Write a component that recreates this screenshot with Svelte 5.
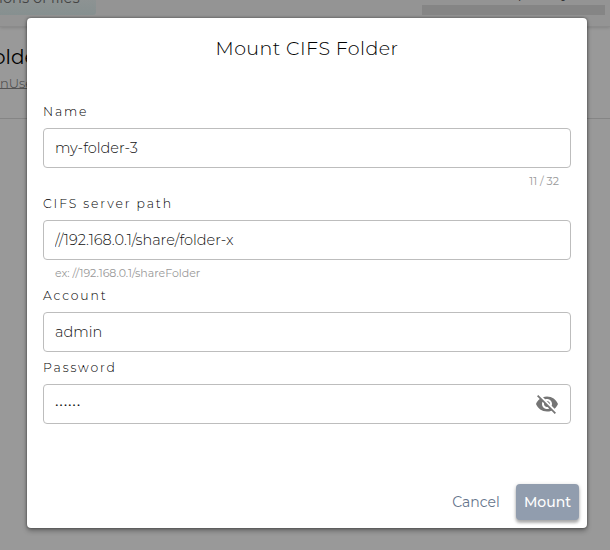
<script>
  let name = $state('my-folder-3');
  let path = $state('//192.168.0.1/share/folder-x');
  let account = $state('admin');
</script>

<div class="page">
  <header>
    <div class="chip">ions of files</div>
    <div class="usage"><span>Capacity</span><div class="bar"></div></div>
  </header>
  <section>
    <h1>olde</h1>
    <a class="user" href="#user">nUse</a>
  </section>
  <div class="shade">
    <form class="dialog" onsubmit={(e) => e.preventDefault()}>
      <h2>Mount CIFS Folder</h2>
      <label for="name">Name</label>
      <input id="name" bind:value={name} />
      <p class="hint count">11 / 32</p>
      <label for="path">CIFS server path</label>
      <input id="path" bind:value={path} />
      <p class="hint">ex: //192.168.0.1/shareFolder</p>
      <label for="account">Account</label>
      <input id="account" bind:value={account} />
      <div class="gap"></div>
      <label for="password">Password</label>
      <div class="field" id="password">
        <span class="dots">••••••</span>
        <svg width="24" height="24" viewBox="0 0 24 24" fill="#757575"><path d="M12 7c2.76 0 5 2.24 5 5 0 .65-.13 1.26-.36 1.83l2.92 2.92c1.51-1.26 2.7-2.89 3.43-4.75-1.73-4.39-6-7.5-11-7.5-1.4 0-2.74.25-3.98.7l2.16 2.16C10.74 7.13 11.35 7 12 7zM2 4.27l2.28 2.28.46.46C3.08 8.3 1.78 10.02 1 12c1.73 4.39 6 7.5 11 7.5 1.55 0 3.03-.3 4.38-.84l.42.42L19.73 22 21 20.73 3.27 3 2 4.27zM7.53 9.8l1.55 1.55c-.05.21-.08.43-.08.65 0 1.66 1.34 3 3 3 .22 0 .44-.03.65-.08l1.55 1.55c-.67.33-1.41.53-2.2.53-2.76 0-5-2.24-5-5 0-.79.2-1.53.53-2.2zm4.31-.78l3.15 3.15.02-.16c0-1.66-1.34-3-3-3l-.17.01z"/></svg>
      </div>
      <footer>
        <button type="button" class="cancel">Cancel</button>
        <button class="mount">Mount</button>
      </footer>
    </form>
  </div>
</div>

<style>
  :global(body) { margin: 0; overflow: hidden; }
  .page { position: relative; width: 610px; height: 550px; overflow: hidden; background: #999; font-family: Montserrat, Inter, "Open Sans", sans-serif; font-weight: 400; color: #222; }
  .page * { box-sizing: border-box; }
  header { height: 27px; background: #949494; border-bottom: 1px solid #8b8b8b; box-shadow: 0 1px 3px rgba(0, 0, 0, .14); display: flex; justify-content: space-between; }
  .chip { width: 96px; height: 17px; margin-top: -2px; line-height: 0; background: linear-gradient(#8e9393, #869090); border-radius: 0 0 3px 0; font-size: 14.6px; color: #444; text-indent: -1px; white-space: nowrap; }
  .usage { width: 183px; margin-right: 5px; display: flex; flex-direction: column; align-items: flex-end; font-size: 14px; }
  .usage span { height: 9px; line-height: 0; margin-right: 34px; margin-top: -7px; letter-spacing: 1.9px; color: #333; }
  .bar { width: 183px; height: 10px; background: #858585; margin-top: 3px; }
  section { height: 92px; border-bottom: 1px solid #858585; padding-top: 18px; }
  h1 { margin: 0 0 0 -7px; font-size: 20px; line-height: 25px; font-weight: 400; color: #000; }
  .user { display: block; width: 60px; height: 20px; border-bottom: 1px solid #555; color: #444; font-size: 13px; font-weight: 300; line-height: 29px; margin-top: -1px; text-decoration: none; }
  .shade { position: absolute; inset: 0; padding: 18px 23px 22px 27px; }
  .dialog { width: 560px; height: 510px; padding: 16px 16px 0; background: #fff; border-radius: 4px; box-shadow: 0 3px 5px rgba(0, 0, 0, .3), 0 0 3px rgba(0, 0, 0, .5); display: flex; flex-direction: column; }
  h2 { margin: 0 0 40px; height: 30px; line-height: 30px; text-align: center; font-size: 19px; font-weight: 300; letter-spacing: .45px; color: #000; }
  label { height: 24px; line-height: 16px; font-size: 12.4px; font-weight: 300; letter-spacing: 1.87px; color: #000; }
  input, .field { width: 528px; height: 40px; border: 1px solid #bdbdbd; border-radius: 4px; padding: 0 11px; background: white; font: 300 14.5px Montserrat, Inter, sans-serif; color: #111; outline: 0; }
  .hint { margin: 0; height: 28px; padding: 5px 12px 0; font-size: 11px; line-height: 16px; color: #999; }
  .count { text-align: right; }
  .gap { height: 8px; }
  .field { display: flex; align-items: center; justify-content: space-between; }
  .dots { font-size: 12px; font-weight: 400; line-height: 12px; letter-spacing: .8px; color: #111; }
  footer { margin-top: auto; height: 44px; display: flex; justify-content: flex-end; margin-right: -8px; gap: 8px; }
  button { height: 36px; border: 0; padding: 0; border-radius: 4px; background: transparent; font: 400 14px Montserrat, Inter, sans-serif; color: #64748b; }
  .cancel { width: 64px; }
  .mount { width: 63px; background: #919dae; color: #fff; font-weight: 500; box-shadow: 0 3px 3px rgba(0, 0, 0, .25), 0 1px 4px rgba(0, 0, 0, .18); }
</style>
